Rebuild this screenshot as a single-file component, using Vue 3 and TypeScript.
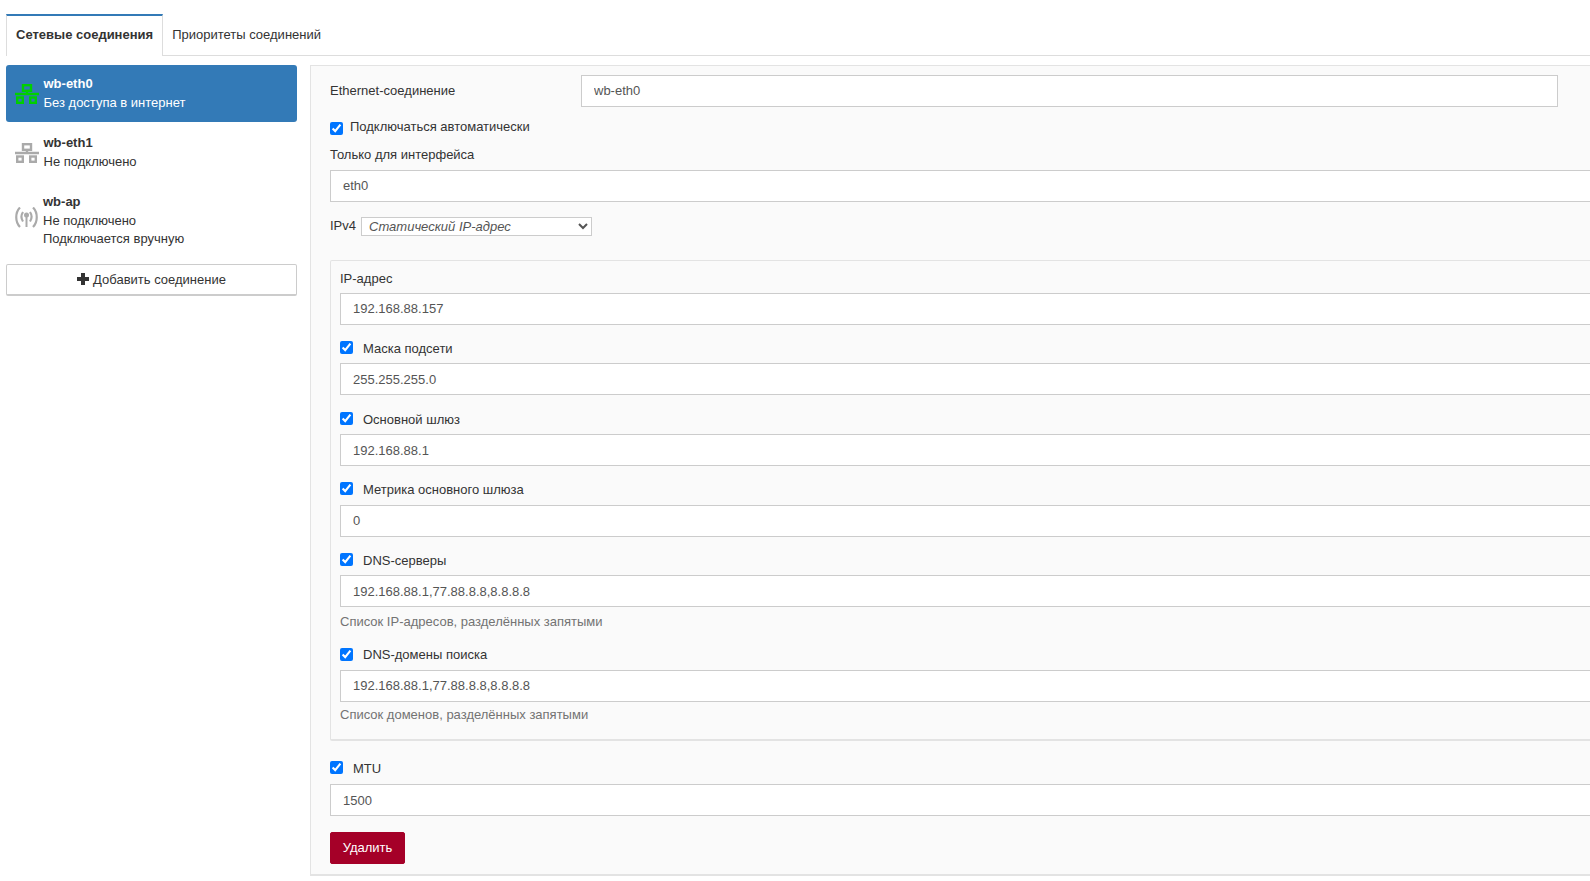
<script setup lang="ts">
interface Field {
  label: string
  value: string
  hint?: string
  checked: boolean
}

const fields: Field[] = [
  { label: 'IP-адрес', value: '192.168.88.157', checked: false },
  { label: 'Маска подсети', value: '255.255.255.0', checked: true },
  { label: 'Основной шлюз', value: '192.168.88.1', checked: true },
  { label: 'Метрика основного шлюза', value: '0', checked: true },
  { label: 'DNS-серверы', value: '192.168.88.1,77.88.8.8,8.8.8.8', hint: 'Список IP-адресов, разделённых запятыми', checked: true },
  { label: 'DNS-домены поиска', value: '192.168.88.1,77.88.8.8,8.8.8.8', hint: 'Список доменов, разделённых запятыми', checked: true },
]
</script>

<template>
  <div class="page">
    <nav class="tabs">
      <a class="tab active">Сетевые соединения</a>
      <a class="tab">Приоритеты соединений</a>
    </nav>
    <div class="content">
      <aside class="side">
        <div class="conn selected">
          <svg class="ico" viewBox="0 0 24 20" fill="none" stroke="#00d000" stroke-width="2.4">
            <rect x="8" y="1.200" width="8" height="5.600" />
            <path d="M12 7v3M0 10h24" />
            <rect x="2.200" y="13.500" width="5.600" height="5.300" />
            <rect x="15.200" y="13.500" width="5.600" height="5.300" />
          </svg>
          <div class="ctext">
            <b>wb-eth0</b>
            <span>Без доступа в интернет</span>
          </div>
        </div>
        <div class="conn">
          <svg class="ico" viewBox="0 0 24 20" fill="none" stroke="#aaa" stroke-width="2.4">
            <rect x="8" y="1.200" width="8" height="5.600" />
            <path d="M12 7v3M0 10h24" />
            <rect x="2.200" y="13.500" width="5.600" height="5.300" />
            <rect x="15.200" y="13.500" width="5.600" height="5.300" />
          </svg>
          <div class="ctext">
            <b>wb-eth1</b>
            <span>Не подключено</span>
          </div>
        </div>
        <div class="conn third">
          <svg class="ico" viewBox="0 0 24 22" fill="none" stroke="#aaa" stroke-width="2.2">
            <path d="M5 .5C0 5.500 0 15 5 20M18 .5c5 5 5 14.500 0 19.500M8 5c-2 3-2 6.500 0 9.500M15 5c2 3 2 6.500 0 9.500" />
            <path d="M11.500 8v12" stroke-width="2" />
            <circle cx="11.500" cy="8" r="2.500" fill="#aaa" stroke="none" />
          </svg>
          <div class="ctext">
            <b>wb-ap</b>
            <span>Не подключено</span>
            <span>Подключается вручную</span>
          </div>
        </div>
        <button class="add" type="button">
          <svg class="plus" viewBox="0 0 12 12" fill="#333"><path d="M4 0h4v4h4v4H8v4H4V8H0V4h4z" /></svg>
          Добавить соединение
        </button>
      </aside>
      <main class="panel">
        <div class="name-row">
          <label class="name-label">Ethernet-соединение</label>
          <input class="inp name-inp" value="wb-eth0" />
        </div>
        <label class="auto"><input type="checkbox" checked /> <span>Подключаться автоматически</span></label>
        <label class="lbl">Только для интерфейса</label>
        <input class="inp" value="eth0" />
        <div class="ipv4">
          <label>IPv4</label>
          <select><option>Статический IP-адрес</option></select>
        </div>
        <section class="box">
          <div v-for="f in fields" :key="f.label" class="field">
            <label class="chk-lbl">
              <input v-if="f.checked" type="checkbox" checked />
              <span>{{ f.label }}</span>
            </label>
            <input class="inp" :value="f.value" />
            <p v-if="f.hint" class="hint">{{ f.hint }}</p>
          </div>
        </section>
        <label class="chk-lbl mtu"><input type="checkbox" checked /><span>MTU</span></label>
        <input class="inp" value="1500" />
        <button class="del" type="button">Удалить</button>
      </main>
    </div>
  </div>
</template>

<style>
html, body { overflow: hidden; height: 881px; }
</style>

<style scoped>
.page {
  width: 1800px;
  padding: 14px 0 0 6px;
  font: 13px/18.5px "Liberation Sans", Arial, sans-serif;
  color: #333;
}
.tabs {
  display: flex;
  border-bottom: 1px solid #ddd;
  height: 41px;
}
.tab {
  height: 41px;
  padding: 10px 9px 0;
  box-sizing: border-box;
  border-top: 2px solid transparent;
}
.tab.active {
  font-weight: 700;
  background: #fff;
  border-top-color: #337ab7;
  border-left: 1px solid #ddd;
  border-right: 1px solid #ddd;
  height: 42px;
}
.content {
  display: flex;
  align-items: flex-start;
  gap: 13px;
  margin-top: 9px;
}
.side { width: 291px; flex: none; }
.conn {
  display: flex;
  align-items: center;
  gap: 4.500px;
  height: 57px;
  padding-left: 9px;
  border-radius: 3px;
  margin-bottom: 2px;
}
.conn.selected { background: #337ab7; color: #fff; }
.conn.third { height: 76px; margin-top: 3px; margin-bottom: 4px; gap: 4px; align-items: flex-start; padding-top: 9px; box-sizing: border-box; }
.third .ico { margin-top: 14px; height: 22px; }
.ico { width: 24px; height: 20px; flex: none; }
.ctext { display: flex; flex-direction: column; }
.add {
  display: flex;
  align-items: center;
  justify-content: center;
  gap: 4px;
  width: 100%;
  height: 32px;
  padding-top: 2px;
  background: #fff;
  border: 1px solid #ccc;
  border-bottom-width: 2px;
  border-radius: 2px;
  font: inherit;
  color: #333;
}
.plus { width: 12px; height: 12px; flex: none; margin-top: -3px; }
.panel {
  width: 1400px;
  box-sizing: border-box;
  height: 811px;
  padding: 9px 19px;
  background: #fafafa;
  border: 1px solid #e3e3e3;
  border-bottom-width: 2px;
  flex: none;
}
.inp {
  display: block;
  width: 100%;
  height: 32px;
  box-sizing: border-box;
  padding: 0 12px;
  border: 1px solid #ccc;
  background: #fff;
  font: inherit;
  color: #555;
  outline: none;
}
.name-row { display: flex; align-items: center; }
.name-label { width: 251px; flex: none; }
.name-inp { width: 977px; padding-bottom: 1px; }
.auto { display: flex; align-items: center; height: 18px; margin-top: 12px; }
.auto input, .chk-lbl input { width: 13px; height: 13px; margin: 0; }
.auto input { margin-top: 1px; }
.auto span { margin-left: 7px; margin-top: -2px; }
.lbl { display: block; margin-top: 9px; margin-bottom: 5px; }
.ipv4 { display: flex; align-items: center; gap: 5px; margin-top: 15px; }
select {
  width: 231px;
  height: 19px;
  font: italic 13px "Liberation Sans", Arial, sans-serif;
  color: #555;
  border: 1px solid #ccc;
  background: #fff;
  padding: 0 3px;
}
.box {
  margin-top: 24px;
  box-sizing: border-box;
  padding: 10px 9px 0;
  border: 1px solid #e3e3e3;
  border-bottom-width: 2px;
  border-radius: 2px;
}
.field { margin-bottom: 15.200px; }
.chk-lbl { display: flex; align-items: center; height: 18.400px; margin-bottom: 5px; }
.field:first-child .chk-lbl { margin-bottom: 4px; }
.chk-lbl input { margin-top: -3px; margin-right: 10px; }
.hint { margin: 6px 0 0; color: #737373; height: 18px; }
.field:last-child .hint { margin-top: 4px; }
.mtu { margin-top: 19px; margin-bottom: 6px; }
.del {
  display: block;
  margin-top: 16px;
  width: 75px;
  height: 32px;
  background: #a50028;
  color: #fff;
  border: 1px solid #a50028;
  border-radius: 2px;
  font: inherit;
}
</style>
